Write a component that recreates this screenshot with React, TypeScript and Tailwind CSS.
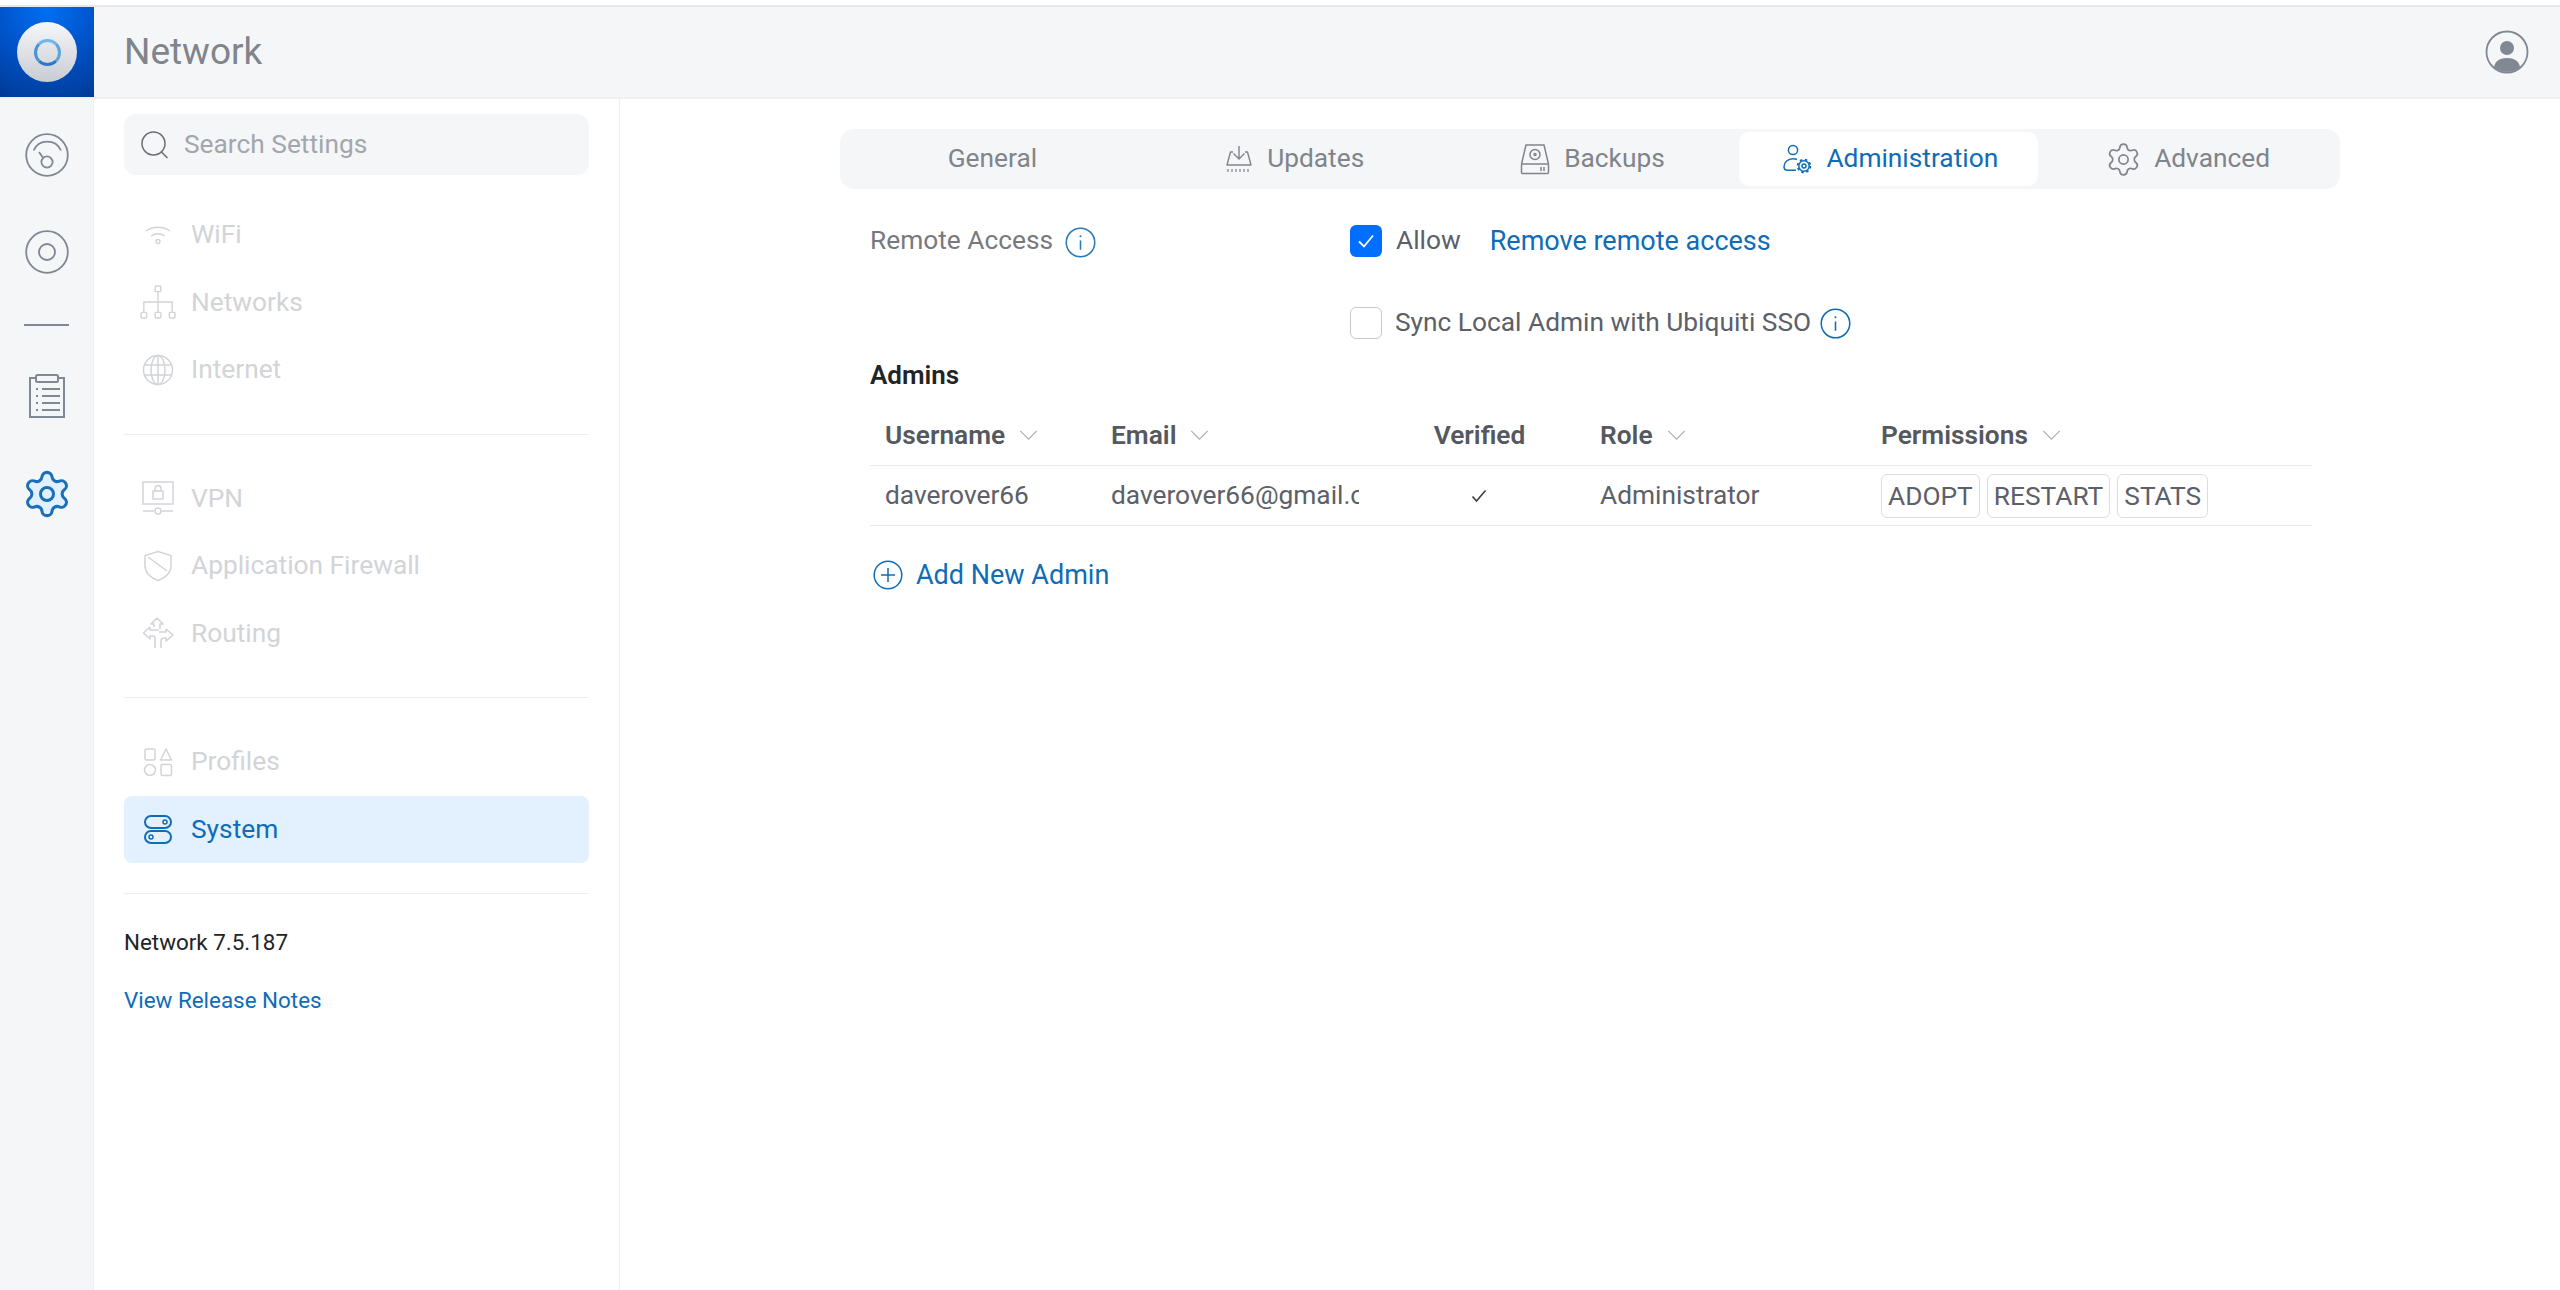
import React from 'react';
import { Settings } from 'lucide-react';

type IconProps = { className?: string };

const Logo = () => (
  <div className="flex w-[94px] shrink-0 items-center justify-center self-stretch bg-[radial-gradient(circle_at_50%_0%,#0070f5_0%,#0050c4_55%,#003a94_100%)]">
    <div className="flex h-[60px] w-[60px] items-center justify-center rounded-full bg-gradient-to-b from-[#f6f7f9] to-[#c9ccd3]">
      <div className="h-[27px] w-[27px] rounded-full border-[3px] border-t-[#6fb8ee] border-r-[#5aa4e0] border-b-[#2f76c4] border-l-[#4a92d6]" />
    </div>
  </div>
);

const GaugeIcon = ({ className }: IconProps) => (
  <svg viewBox="0 0 44 44" fill="none" stroke="currentColor" strokeWidth="1.8" className={className}>
    <circle cx="22" cy="22" r="20.8" />
    <path d="M8.6 17.5A15 15 0 0 1 36 17.5" />
    <path d="M14 19l4.2 6" />
    <circle cx="22" cy="29" r="5.6" />
  </svg>
);

const DiscIcon = ({ className }: IconProps) => (
  <svg viewBox="0 0 44 44" fill="none" stroke="currentColor" strokeWidth="1.8" className={className}>
    <circle cx="22" cy="22" r="20.8" />
    <circle cx="22" cy="22" r="8" />
  </svg>
);

const ClipboardIcon = ({ className }: IconProps) => (
  <svg viewBox="0 0 38 44" fill="none" stroke="currentColor" strokeWidth="2" className={className}>
    <path d="M8 4H2v39h34V4h-6" />
    <rect x="8" y="1" width="22" height="7" rx="1.5" />
    <path d="M8 15h2M14 15h18M8 22h2M14 22h18M8 29h2M14 29h18M8 36h2M14 36h18" />
  </svg>
);

const WifiIcon = ({ className }: IconProps) => (
  <svg viewBox="0 0 30 30" fill="none" stroke="currentColor" strokeWidth="1.4" className={className}>
    <path d="M3 11c7-5 17-5 24 0M8 16c4.500-3 9.500-3 14 0" />
    <circle cx="15" cy="21.500" r="2" />
  </svg>
);

const NetworksIcon = ({ className }: IconProps) => (
  <svg viewBox="0 0 38 36" fill="none" stroke="currentColor" strokeWidth="1.5" className={className}>
    <rect x="16" y="1" width="6" height="6" rx="1" />
    <path d="M19 7v11M4 29V18h30v11M19 18v11" />
    <rect x="1" y="29" width="6" height="6" rx="1" />
    <rect x="16" y="29" width="6" height="6" rx="1" />
    <rect x="31" y="29" width="6" height="6" rx="1" />
  </svg>
);

const GlobeIcon = ({ className }: IconProps) => (
  <svg viewBox="0 0 32 32" fill="none" stroke="currentColor" strokeWidth="1.5" className={className}>
    <circle cx="16" cy="16" r="14.500" />
    <ellipse cx="16" cy="16" rx="7" ry="14.500" />
    <path d="M16 1.500v29M2.500 11h27M2.500 21h27" />
  </svg>
);

const VpnIcon = ({ className }: IconProps) => (
  <svg viewBox="0 0 32 34" fill="none" stroke="currentColor" strokeWidth="1.5" className={className}>
    <rect x="1" y="1" width="30" height="22" />
    <rect x="11" y="10" width="10" height="8" />
    <path d="M13 10V7.500a3 3 0 0 1 6 0V10M1 30h11M20 30h11" />
    <circle cx="16" cy="30" r="3" />
  </svg>
);

const ShieldIcon = ({ className }: IconProps) => (
  <svg viewBox="0 0 30 32" fill="none" stroke="currentColor" strokeWidth="1.5" className={className}>
    <path d="M15 1.500l13 4v10c0 7-5 12-13 15-8-3-13-8-13-15v-10z" />
    <path d="M5 7l19 14" />
  </svg>
);

const RoutingIcon = ({ className }: IconProps) => (
  <svg viewBox="0 0 32 32" fill="none" stroke="currentColor" strokeWidth="1.6" strokeLinejoin="round" className={className}>
    <path d="M15 1l6 6h-3v5M15 1L9 7h3v3" />
    <path d="M8 10L1.500 16 8 22v-3h3a2 2 0 0 1 2 2v10" />
    <path d="M8 10v3h9" />
    <path d="M24 12l7 6-7 6v-3h-2a3 3 0 0 0-3 3v7M24 12v3h-7" />
  </svg>
);

const ProfilesIcon = ({ className }: IconProps) => (
  <svg viewBox="0 0 30 30" fill="none" stroke="currentColor" strokeWidth="1.5" strokeLinejoin="round" className={className}>
    <rect x="2" y="2" width="10" height="11" rx="1.500" />
    <path d="M23 2l5.500 11h-11z" />
    <circle cx="7" cy="23" r="5.500" />
    <rect x="18" y="17.500" width="10.500" height="11" rx="1.500" />
  </svg>
);

const SystemIcon = ({ className }: IconProps) => (
  <svg viewBox="0 0 30 30" fill="none" stroke="currentColor" strokeWidth="2" className={className}>
    <rect x="2" y="2" width="26" height="12" rx="6" />
    <rect x="2" y="17" width="26" height="12" rx="6" />
    <circle cx="22" cy="8" r="2" strokeWidth="1.500" />
    <circle cx="8" cy="23" r="2" strokeWidth="1.500" />
  </svg>
);

const UpdatesIcon = ({ className }: IconProps) => (
  <svg viewBox="0 0 26 26" fill="none" stroke="currentColor" strokeWidth="1.400" strokeLinejoin="round" className={className}>
    <path d="M13 0v13M7.500 7.500L13 13l5.500-5.500" />
    <path d="M7 6H4.500L1 19h24L21.500 6H19" />
    <path d="M2 23v3M6 23v3M10 23v3M14 23v3M18 23v3M22 23v3" strokeWidth="1.200" />
  </svg>
);

const BackupsIcon = ({ className }: IconProps) => (
  <svg viewBox="0 0 30 32" fill="none" stroke="currentColor" strokeWidth="1.500" className={className}>
    <path d="M1.500 21L6 2h18l4.500 19" />
    <rect x="1.500" y="21" width="27" height="9.500" rx="1" />
    <circle cx="15" cy="11.500" r="5" />
    <circle cx="15" cy="11.500" r="1" />
    <path d="M21 24v4M24 24v4" />
  </svg>
);

const AdminIcon = ({ className }: IconProps) => (
  <svg viewBox="0 0 30 30" fill="none" stroke="currentColor" strokeWidth="1.500" className={className}>
    <circle cx="11" cy="6" r="4.600" />
    <path d="M15 15.500c-1-.500-2.400-.800-4-.800-5 0-9 3.500-9 8 0 2 1.500 3.500 3.500 3.500H14" />
    <circle cx="22" cy="22" r="5.200" />
    <circle cx="22" cy="22" r="6.400" strokeDasharray="2.500 2.530" strokeWidth="1.800" />
    <circle cx="22" cy="22" r="2" />
  </svg>
);

const InfoIcon = ({ className }: IconProps) => (
  <svg viewBox="0 0 30 30" fill="none" stroke="currentColor" strokeWidth="1.500" className={className}>
    <circle cx="15" cy="15" r="13.800" />
    <path d="M15 13v9" />
    <circle cx="15" cy="9" r="1" fill="currentColor" stroke="none" />
  </svg>
);

const PlusCircle = ({ className }: IconProps) => (
  <svg viewBox="0 0 30 30" fill="none" stroke="currentColor" strokeWidth="1.500" className={className}>
    <circle cx="15" cy="15" r="13.800" />
    <path d="M15 8v14M8 15h14" />
  </svg>
);

const Chevron = () => (
  <svg viewBox="0 0 20 12" fill="none" stroke="#a9adb3" strokeWidth="1.200" className="ml-[14px] h-[11px] w-[19px]">
    <path d="M1 1l9 9 9-9" />
  </svg>
);

const SearchIcon = ({ className }: IconProps) => (
  <svg viewBox="0 0 30 30" fill="none" stroke="currentColor" strokeWidth="1.500" className={className}>
    <circle cx="13.500" cy="13.500" r="11.500" />
    <path d="M21.500 22l6 6" />
  </svg>
);

const UserCircle = ({ className }: IconProps) => (
  <svg viewBox="0 0 44 44" fill="none" className={className}>
    <circle cx="22" cy="22" r="20.500" stroke="#808893" strokeWidth="1.800" />
    <circle cx="22" cy="18" r="7" fill="#808893" />
    <path d="M9 37c1-6 6-9 13-9s12 3 13 9a20 20 0 0 1-26 0z" fill="#808893" />
  </svg>
);

const NavItem = ({ icon, label, active }: { icon: React.ReactNode; label: string; active?: boolean }) => (
  <div className={`flex h-[67.5px] items-center rounded-[8px] ${active ? 'bg-[#e3f0fe] text-[#0f6cb8]' : 'text-[#d2d4d8]'}`}>
    <div className="flex w-[67px] shrink-0 justify-center">{icon}</div>
    <span>{label}</span>
  </div>
);

const Divider = () => <div className="my-[30px] h-px bg-[#eeeff1]" />;

const tabs = [
  { label: 'General', icon: null },
  { label: 'Updates', icon: <UpdatesIcon className="ml-[8px] mr-[15px] h-[26px] w-[26px]" /> },
  { label: 'Backups', icon: <BackupsIcon className="ml-[5px] mr-[14px] h-[32px] w-[30px]" /> },
  { label: 'Administration', icon: <AdminIcon className="ml-[3px] mr-[14px] h-[30px] w-[30px]" />, active: true },
  { label: 'Advanced', icon: <Settings strokeWidth={1.1} className="mr-[12px] h-[37px] w-[37px]" /> },
];

const perms = ['ADOPT', 'RESTART', 'STATS'];

export default function App() {
  return (
    <div className="flex h-[1290px] w-full flex-col overflow-hidden bg-white font-['Roboto',sans-serif] text-[26.3px] text-[#5c6068]">
      <div className="h-[5px] bg-white" />
      <div className="h-[2px] bg-[#e6e7e9]" />

      <header className="flex h-[92px] shrink-0 items-center border-b-2 border-[#eeeff1] bg-[#f5f6f8]">
        <Logo />
        <h1 className="ml-[30px] text-[37px] text-[#80848b]">Network</h1>
        <div className="ml-auto mr-[31px]">
          <UserCircle className="h-[44px] w-[44px]" />
        </div>
      </header>

      <div className="flex min-h-0 flex-1">
        <aside className="flex w-[94px] shrink-0 flex-col items-center border-r border-[#eeeff1] bg-[#f5f6f8] pt-[34px] text-[#808893]">
          <GaugeIcon className="h-[44px] w-[44px]" />
          <DiscIcon className="mt-[53px] h-[44px] w-[44px]" />
          <div className="mt-[50px] h-[2px] w-[45px] bg-[#808893]" />
          <ClipboardIcon className="mt-[48px] h-[44px] w-[38px]" />
          <Settings strokeWidth={1.4} className="mt-[50px] h-[52px] w-[52px] fill-[#e1f0ff] text-[#1a6fb8]" />
        </aside>

        <nav className="w-[526px] shrink-0 border-r border-[#eeeff1] pl-[30px] pr-[30px] pt-[15px]">
          <div className="flex h-[61px] items-center rounded-[12px] bg-[#f5f6f8] px-4">
            <SearchIcon className="h-[30px] w-[30px] text-[#6a6e75]" />
            <span className="ml-[14px] text-[#a3a6ad]">Search Settings</span>
          </div>

          <div className="mt-[26px]">
            <NavItem icon={<WifiIcon className="h-[30px] w-[30px]" />} label="WiFi" />
            <NavItem icon={<NetworksIcon className="h-[34px] w-[38px]" />} label="Networks" />
            <NavItem icon={<GlobeIcon className="h-[32px] w-[32px]" />} label="Internet" />
          </div>
          <Divider />
          <div>
            <NavItem icon={<VpnIcon className="h-[34px] w-[32px]" />} label="VPN" />
            <NavItem icon={<ShieldIcon className="h-[32px] w-[30px]" />} label="Application Firewall" />
            <NavItem icon={<RoutingIcon className="h-[32px] w-[32px]" />} label="Routing" />
          </div>
          <Divider />
          <div>
            <NavItem icon={<ProfilesIcon className="h-[30px] w-[30px]" />} label="Profiles" />
            <NavItem icon={<SystemIcon className="h-[30px] w-[30px]" />} label="System" active />
          </div>
          <Divider />
          <p className="mt-[37px] text-[22.4px] leading-none text-[#222326]">Network 7.5.187</p>
          <p className="mt-[36px] text-[22.4px] leading-none text-[#0f6cb8]">View Release Notes</p>
        </nav>

        <main className="min-w-0 flex-1 pl-[220px] pt-[30px]">
          <div className="grid h-[60px] w-[1500px] grid-cols-5 rounded-[14px] bg-[#f5f6f8] p-[3px]">
            {tabs.map((t) => (
              <div
                key={t.label}
                className={`flex items-center justify-center rounded-[10px] ${t.active ? 'bg-white text-[#0f6cb8]' : 'text-[#80848b]'}`}
              >
                {t.icon}
                <span>{t.label}</span>
              </div>
            ))}
          </div>

          <div className="ml-[30px] w-[1442px]">
            <div className="mt-[31px] flex h-[42px] items-center">
              <div className="flex w-[480px] items-center">
                <span className="text-[#77797f]">Remote Access</span>
                <InfoIcon className="ml-3 mt-[2px] h-[31px] w-[31px] text-[#2a7ab8]" />
              </div>
              <div className="flex h-[32px] w-[32px] items-center justify-center rounded-[6px] bg-[#006fff]">
                <svg viewBox="0 0 20 20" fill="none" stroke="white" strokeWidth="1.800" className="h-[20px] w-[20px]">
                  <path d="M3 10.500l5 5 9-11" />
                </svg>
              </div>
              <span className="ml-[14px]">Allow</span>
              <span className="ml-[29px] text-[27px] text-[#0f6cb8]">Remove remote access</span>
            </div>

            <div className="mt-[40px] flex h-[42px] items-center pl-[480px]">
              <div className="h-[32px] w-[32px] rounded-[6px] border border-[#c7c9cd] bg-white" />
              <span className="ml-[13px]">Sync Local Admin with Ubiquiti SSO</span>
              <InfoIcon className="ml-[9px] mt-[1px] h-[31px] w-[31px] text-[#0f6cb8]" />
            </div>

            <h2 className="mt-[10px] text-[26px] font-semibold leading-[42px] text-[#222326]">Admins</h2>

            <div className="mt-[10px] grid grid-cols-[226px_278px_211px_281px_446px]">
              <div className="col-span-5 grid h-[60px] grid-cols-subgrid items-center border-b border-[#e8e9eb] font-semibold text-[#55585e]">
                <div className="flex items-center pl-[15px]">Username<Chevron /></div>
                <div className="flex items-center pl-[15px]">Email<Chevron /></div>
                <div className="text-center">Verified</div>
                <div className="flex items-center pl-[15px]">Role<Chevron /></div>
                <div className="flex items-center pl-[15px]">Permissions<Chevron /></div>
              </div>
              <div className="col-span-5 grid h-[60px] grid-cols-subgrid items-center border-b border-[#e8e9eb]">
                <div className="pl-[15px]">daverover66</div>
                <div className="overflow-hidden whitespace-nowrap px-[15px]">
                  <div className="overflow-hidden">daverover66@gmail.com</div>
                </div>
                <div className="flex justify-center pr-[2px]">
                  <svg viewBox="0 0 16 14" fill="none" stroke="#3a3d42" strokeWidth="1.600" className="h-[14px] w-[16px]">
                    <path d="M1.500 7.500l4 4.500L14.500 1.500" />
                  </svg>
                </div>
                <div className="pl-[15px]">Administrator</div>
                <div className="flex gap-[7px] pl-[15px]">
                  {perms.map((p) => (
                    <span key={p} className="rounded-[6px] border border-[#dcdde0] px-[6px] leading-[42px]">{p}</span>
                  ))}
                </div>
              </div>
            </div>

            <div className="mt-[29px] flex items-center text-[#0f6cb8]">
              <PlusCircle className="ml-[3px] h-[30px] w-[30px]" />
              <span className="ml-[13px] text-[27px]">Add New Admin</span>
            </div>
          </div>
        </main>
      </div>
    </div>
  );
}
